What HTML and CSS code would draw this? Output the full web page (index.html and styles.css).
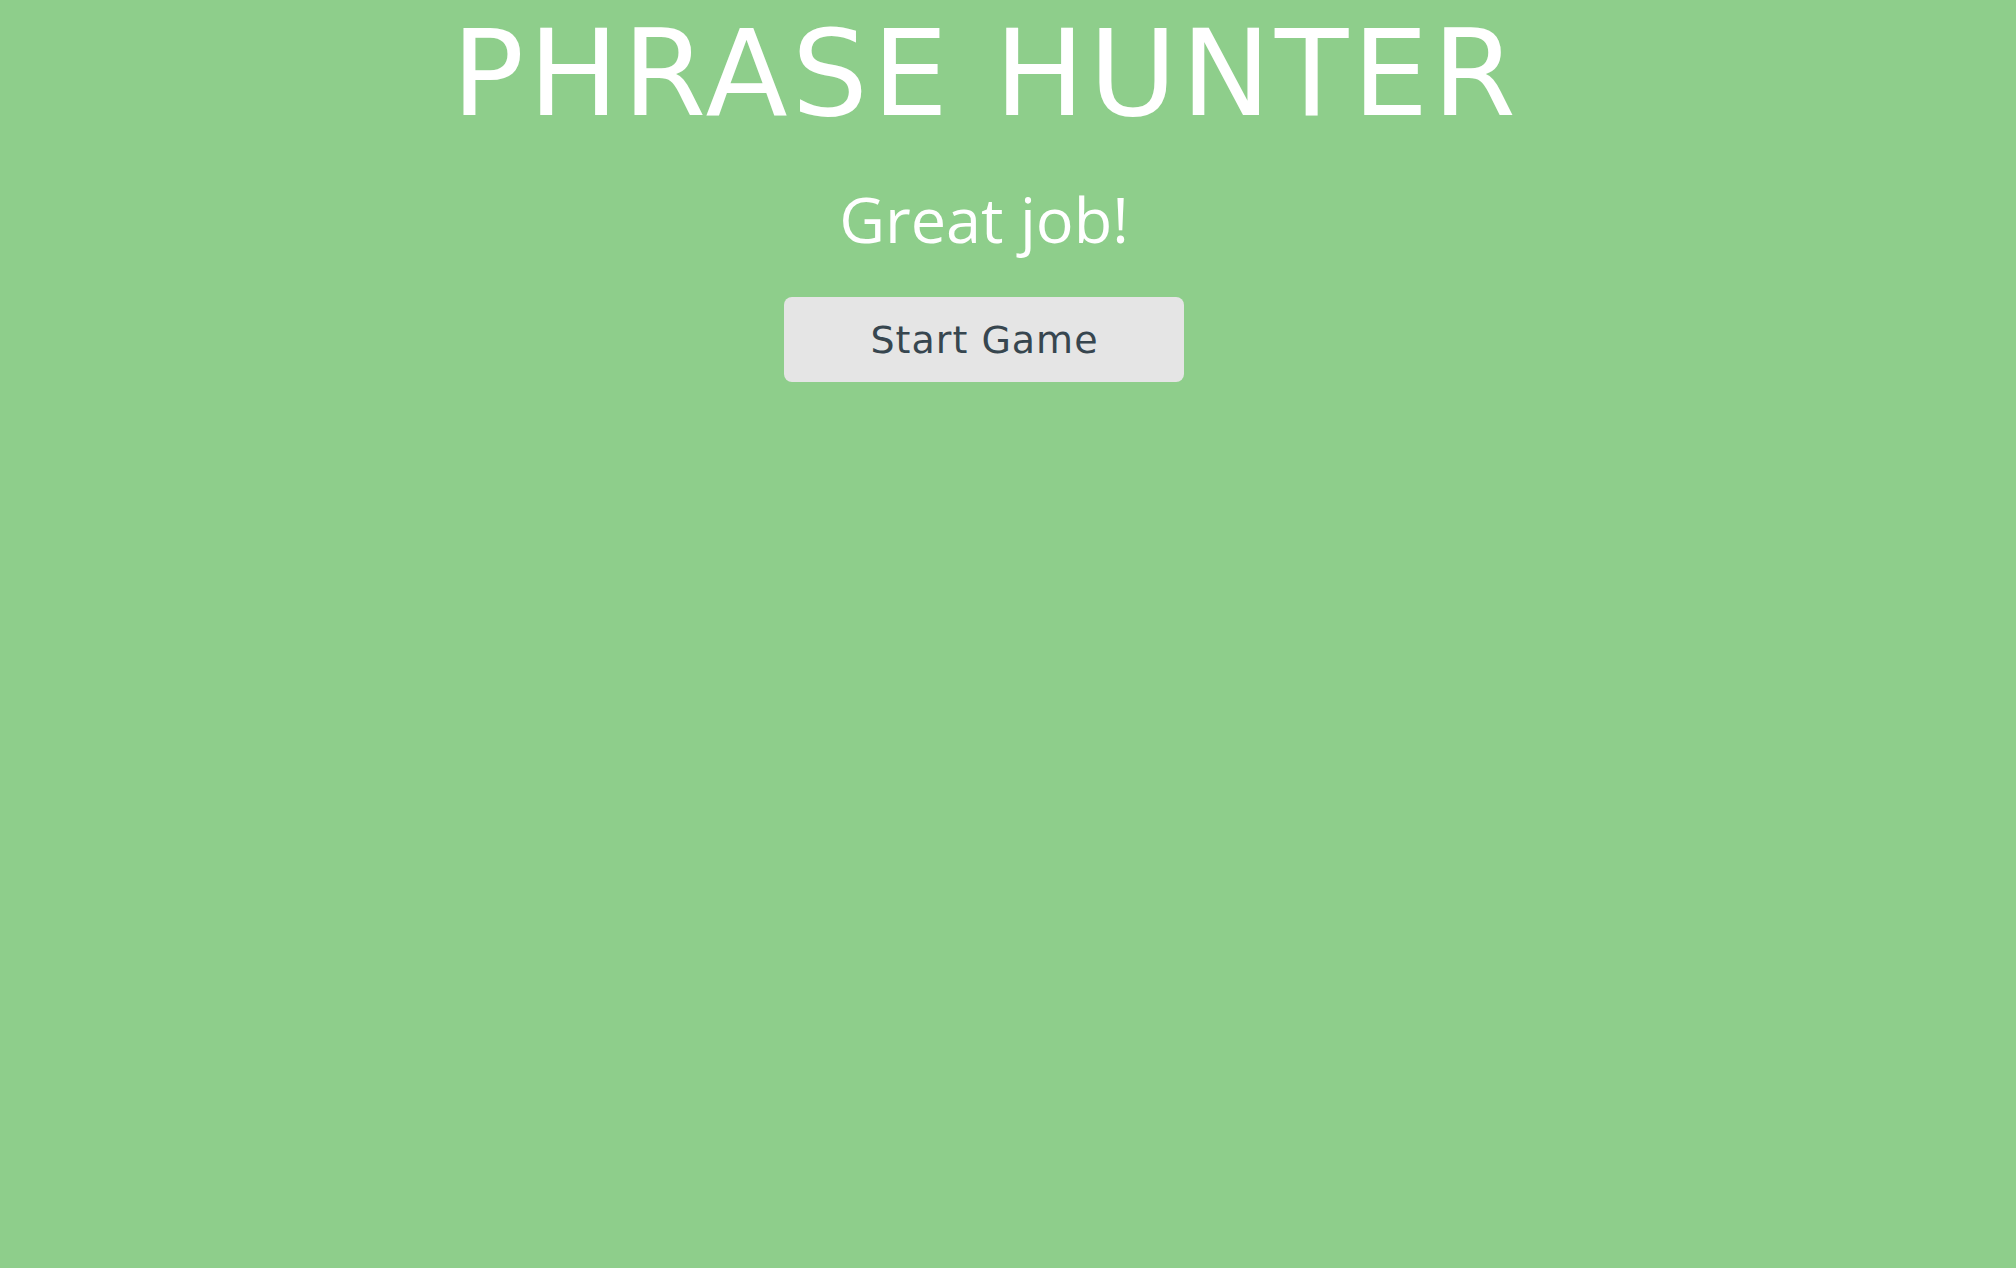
FILE: index.html
```html
<!DOCTYPE html>
<html lang="en">
<head>
<meta charset="utf-8">
<title>Phrase Hunter</title>
<link rel="stylesheet" href="styles.css">
</head>
<body>
<main class="overlay">
  <h1 class="title">PHRASE HUNTER</h1>
  <h2 class="message">Great job!</h2>
  <button class="btn-reset" type="button">Start Game</button>
</main>
</body>
</html>
```

FILE: styles.css
```css
html, body {
  margin: 0;
  padding: 0;
  height: 100%;
}
body {
  background: #8ece8b;
}
.overlay {
  display: flex;
  flex-direction: column;
  align-items: center;
  padding-right: 48px;
  box-sizing: border-box;
  min-height: 100%;
}
.title {
  margin: 14px 0 0;
  padding-left: 4px;
  font-family: "DejaVu Sans", sans-serif;
  font-weight: 400;
  font-size: 120px;
  line-height: 1;
  letter-spacing: 4.2px;
  color: #ffffff;
}
.message {
  margin: 53px 0 0;
  font-family: "Open Sans", sans-serif;
  font-weight: 400;
  font-size: 63px;
  line-height: 1;
  color: #ffffff;
}
.btn-reset {
  margin-top: 47px;
  width: 400px;
  height: 85px;
  border: none;
  border-radius: 8px;
  background: #e5e5e5;
  color: #37464f;
  font-family: "DejaVu Sans", sans-serif;
  font-size: 38px;
  letter-spacing: 1px;
  line-height: 85px;
  padding: 1px 0 0 1px;
  cursor: pointer;
}
```
